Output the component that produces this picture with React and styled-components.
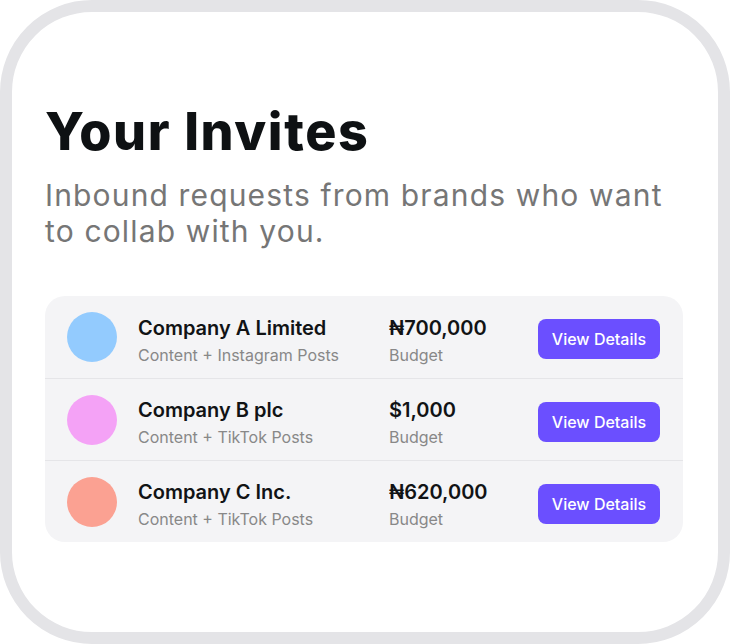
import React from "react";
import styled, { createGlobalStyle } from "styled-components";

const Global = createGlobalStyle`
  html, body { margin: 0; padding: 0; background: #ffffff; }
  body { font-family: Inter, "Noto Sans", sans-serif; }
  * { box-sizing: border-box; }
`;

const Card = styled.div`
  width: 730px;
  height: 644px;
  border: 12px solid #e4e4e7;
  border-radius: 92px;
  background: #ffffff;
  padding: 90px 35px 0 33px;
  display: flex;
  flex-direction: column;
`;

const Title = styled.h1`
  margin: 0;
  font-size: 52px;
  line-height: 60px;
  font-weight: 800;
  letter-spacing: 1.6px;
  color: #0e1113;
`;

const Subtitle = styled.p`
  margin: 15px 0 0;
  font-size: 30px;
  line-height: 36px;
  font-weight: 400;
  letter-spacing: 1.15px;
  color: #767676;
`;

const List = styled.div`
  margin-top: 47px;
  width: 638px;
  background: #f4f4f6;
  border-radius: 20px;
  display: flex;
  flex-direction: column;
`;

const Row = styled.div`
  height: 82px;
  display: grid;
  grid-template-columns: 50px 230px 128px 122px;
  column-gap: 21px;
  align-items: center;
  padding: 0 23px 0 22px;
  border-top: ${(p) => (p.$first ? "none" : "1px solid #e5e5e8")};
`;

const Avatar = styled.div`
  width: 50px;
  height: 50px;
  border-radius: 50%;
  background: ${(p) => p.$color};
`;

const Stack = styled.div`
  display: flex;
  flex-direction: column;
  gap: 5px;
  margin-top: 6px;
`;

const Strong = styled.div`
  font-size: 20px;
  line-height: 24px;
  font-weight: 600;
  color: #111315;
  white-space: nowrap;
`;

const Muted = styled.div`
  font-size: 16px;
  line-height: 20px;
  color: #888888;
  white-space: nowrap;
`;

const Button = styled.button`
  width: 122px;
  height: 40px;
  margin-top: 4px;
  border: none;
  border-radius: 8px;
  background: #6b4fff;
  color: #ffffff;
  font-family: inherit;
  font-size: 16px;
  font-weight: 500;
  cursor: pointer;
`;

const invites = [
  { name: "Company A Limited", desc: "Content + Instagram Posts", budget: "₦700,000", color: "#93cbfe" },
  { name: "Company B plc", desc: "Content + TikTok Posts", budget: "$1,000", color: "#f4a2f6" },
  { name: "Company C Inc.", desc: "Content + TikTok Posts", budget: "₦620,000", color: "#fba192" },
];

export default function App() {
  return (
    <>
      <Global />
      <Card>
        <Title>Your Invites</Title>
        <Subtitle>
          Inbound requests from brands who want
          <br />
          to collab with you.
        </Subtitle>
        <List>
          {invites.map((inv, i) => (
            <Row key={inv.name} $first={i === 0}>
              <Avatar $color={inv.color} />
              <Stack>
                <Strong>{inv.name}</Strong>
                <Muted>{inv.desc}</Muted>
              </Stack>
              <Stack>
                <Strong>{inv.budget}</Strong>
                <Muted>Budget</Muted>
              </Stack>
              <Button>View Details</Button>
            </Row>
          ))}
        </List>
      </Card>
    </>
  );
}
